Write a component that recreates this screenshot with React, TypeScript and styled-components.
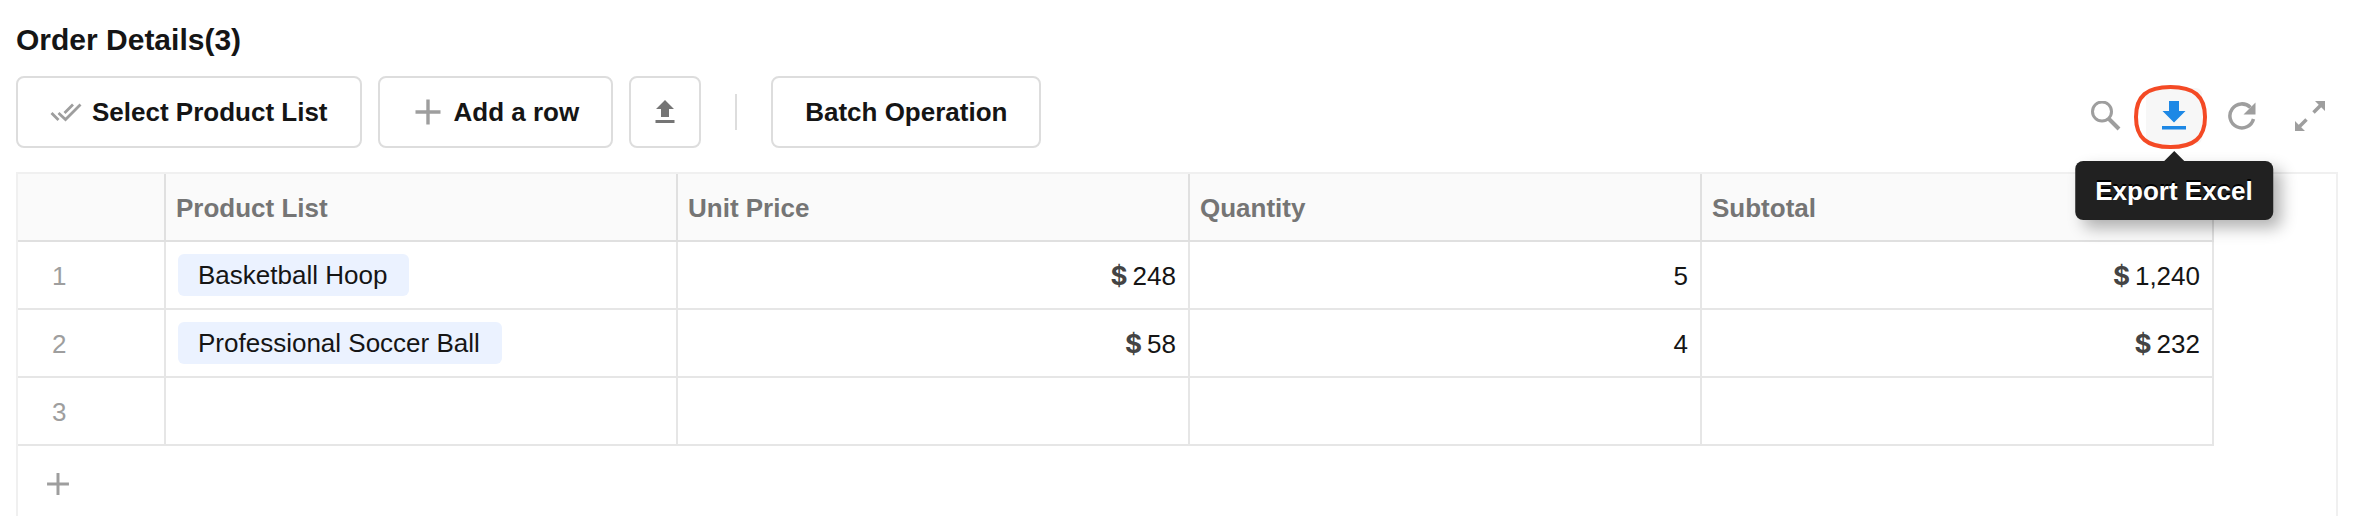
import React from "react";
import styled, { createGlobalStyle } from "styled-components";

const GlobalStyle = createGlobalStyle`
  *, *::before, *::after { box-sizing: border-box; }
  body {
    margin: 0;
    background: #fff;
    color: #151515;
    font-family: "Liberation Sans", Arial, sans-serif;
    font-size: 26px;
    line-height: 32px;
  }
  button { font: inherit; color: inherit; cursor: pointer; }
`;

const Page = styled.main`
  padding: 22px 30px 14px 16px;
`;

const Title = styled.h1`
  margin: 0;
  font-size: 30px;
  line-height: 36px;
  font-weight: 700;
`;

const Toolbar = styled.div`
  display: flex;
  align-items: flex-start;
  justify-content: space-between;
  margin: 18px 0 24px;
`;

const Actions = styled.div`
  display: flex;
  align-items: center;
  gap: 16px;
`;

const ActionButton = styled.button<{ $square?: boolean }>`
  display: flex;
  align-items: center;
  justify-content: center;
  gap: 10px;
  height: 72px;
  width: ${(p) => (p.$square ? "72px" : "auto")};
  padding: ${(p) => (p.$square ? "0" : "0 32px")};
  border: 2px solid #ddd;
  border-radius: 8px;
  background: #fff;
  font-weight: 700;
  white-space: nowrap;
`;

const Divider = styled.span`
  width: 2px;
  height: 36px;
  margin: 0 18px;
  background: #ddd;
`;

const Tools = styled.div`
  display: flex;
  gap: 12px;
  padding-top: 12px;
`;

const ToolSlot = styled.div`
  position: relative;
`;

const ToolButton = styled.button<{ $active?: boolean }>`
  display: flex;
  align-items: center;
  justify-content: center;
  width: 56px;
  height: 56px;
  padding: 0;
  border: 0;
  border-radius: 6px;
  background: ${(p) => (p.$active ? "#f7f7f7" : "transparent")};
`;

const Ring = styled.svg`
  position: absolute;
  left: -12px;
  top: -4px;
  overflow: visible;
  pointer-events: none;
`;

const Tooltip = styled.div`
  position: absolute;
  z-index: 2;
  top: 73px;
  left: 50%;
  transform: translateX(-50%);
  padding: 14px 20px 13px;
  border-radius: 8px;
  background: #212121;
  color: #fff;
  font-weight: 700;
  white-space: nowrap;
  text-shadow: 0 -2px 0 #000;
  box-shadow: 8px 8px 16px rgba(0, 0, 0, 0.3);

  &::before {
    content: "";
    position: absolute;
    top: -10px;
    left: 50%;
    margin-left: -10px;
    border: solid transparent;
    border-width: 0 10px 10px;
    border-bottom-color: #212121;
  }
`;

const Sheet = styled.section`
  border: 2px solid #f0f0f0;
  border-bottom: 0;
`;

const Grid = styled.table`
  width: calc(100% - 122px);
  table-layout: fixed;
  border-collapse: separate;
  border-spacing: 0;
`;

const IndexCol = styled.col`
  width: 148px;
`;

const HeadCell = styled.th`
  height: 68px;
  padding: 2px 10px 0;
  border: solid #e0e0e0;
  border-width: 0 2px 2px 0;
  background: #fafafa;
  color: #757575;
  font-weight: 700;
  text-align: left;
`;

const Cell = styled.td<{ $numeric?: boolean }>`
  height: 68px;
  padding: ${(p) => (p.$numeric ? "2px 12px 0" : "0 12px")};
  border: solid #e6e6e6;
  border-width: 0 2px 2px 0;
  text-align: ${(p) => (p.$numeric ? "right" : "left")};
`;

const IndexCell = styled(Cell)`
  padding: 2px 0 0 34px;
  color: #9e9e9e;
`;

const Chip = styled.span`
  display: block;
  width: fit-content;
  padding: 5px 22px 5px 20px;
  border-radius: 6px;
  background: #ebf2ff;
`;

const Currency = styled.span`
  margin-right: 5px;
  color: #444;
  font-family: Inter, sans-serif;
  font-weight: 700;
  line-height: 1;
`;

const AddRow = styled.button`
  display: flex;
  align-items: center;
  width: 148px;
  height: 70px;
  padding: 6px 0 0 26px;
  border: 0;
  background: transparent;
`;

const CheckAllIcon = () => (
  <svg width="32" height="32" viewBox="0 0 32 32" fill="none" stroke="#9e9e9e" strokeWidth="2.8" aria-hidden="true">
    <path d="M1.500 17l7 7M8.500 17l7 6.500L30.500 8.500M14.500 17l8.500-8.500" />
  </svg>
);

const PlusIcon = ({ size, color = "#9e9e9e" }: { size: number; color?: string }) => (
  <svg width={size} height={size} viewBox="0 0 32 32" fill="none" stroke={color} strokeWidth="3.4" aria-hidden="true">
    <path d="M16 3.500v25M3.500 16h25" />
  </svg>
);

const UploadIcon = () => (
  <svg width="20" height="24" viewBox="0 0 20 24" fill="#757575" aria-hidden="true">
    <path d="M10 0L19 9h-5v8H6v-8H1zM0.500 20h19v3h-19z" />
  </svg>
);

const SearchIcon = () => (
  <svg width="30" height="30" viewBox="0 0 30 30" fill="none" stroke="#9e9e9e" aria-hidden="true">
    <circle cx="11" cy="10.500" r="9.500" strokeWidth="3" />
    <path d="M17.500 17.500L28 28" strokeWidth="4" />
  </svg>
);

const DownloadIcon = () => (
  <svg width="24" height="30" viewBox="0 0 24 30" fill="#1e88e5" aria-hidden="true">
    <path d="M7 0h10v10h6.500L12 21.500 0.500 10H7zM0 25h24v3.500H0z" />
  </svg>
);

const RefreshIcon = () => (
  <svg width="30" height="30" viewBox="0 0 30 30" aria-hidden="true">
    <path d="M23.500 6.500A12 12 0 1 0 26.500 18" fill="none" stroke="#9e9e9e" strokeWidth="3.500" />
    <path d="M28.500 1.500v12h-12z" fill="#9e9e9e" />
  </svg>
);

const ExpandIcon = () => (
  <svg width="32" height="32" viewBox="0 0 32 32" fill="#9e9e9e" aria-hidden="true">
    <path d="M21 1h10v10zM1 21v10h10z" />
    <path d="M19.500 12.500l8-8M12.500 19.500l-8 8" stroke="#9e9e9e" strokeWidth="3.500" />
  </svg>
);

const columns = ["Product List", "Unit Price", "Quantity", "Subtotal"];

const orders = [
  { product: "Basketball Hoop", price: "248", quantity: "5", subtotal: "1,240" },
  { product: "Professional Soccer Ball", price: "58", quantity: "4", subtotal: "232" },
  { product: "", price: "", quantity: "", subtotal: "" },
];

const Money = ({ amount }: { amount: string }) =>
  amount ? (
    <>
      <Currency>$</Currency>
      {amount}
    </>
  ) : null;

export default function App() {
  return (
    <Page>
      <GlobalStyle />
      <Title>Order Details(3)</Title>
      <Toolbar>
        <Actions>
          <ActionButton type="button">
            <CheckAllIcon />
            Select Product List
          </ActionButton>
          <ActionButton type="button">
            <PlusIcon size={32} />
            Add a row
          </ActionButton>
          <ActionButton type="button" $square aria-label="Import">
            <UploadIcon />
          </ActionButton>
          <Divider />
          <ActionButton type="button">Batch Operation</ActionButton>
        </Actions>
        <Tools>
          <ToolButton type="button" aria-label="Search">
            <SearchIcon />
          </ToolButton>
          <ToolSlot>
            <ToolButton type="button" $active aria-labelledby="export-tip">
              <DownloadIcon />
            </ToolButton>
            <Ring width="74" height="66" viewBox="0 0 74 66" fill="none" stroke="#f44a25" strokeWidth="4" aria-hidden="true">
              <path d="M36.500 3C60 3 71 12 71 33S60 63 36.500 63 2 54 2 33 13 3 36.500 3z" />
            </Ring>
            <Tooltip id="export-tip" role="tooltip">
              Export Excel
            </Tooltip>
          </ToolSlot>
          <ToolButton type="button" aria-label="Refresh">
            <RefreshIcon />
          </ToolButton>
          <ToolButton type="button" aria-label="Full screen">
            <ExpandIcon />
          </ToolButton>
        </Tools>
      </Toolbar>
      <Sheet>
        <Grid>
          <colgroup>
            <IndexCol />
            {columns.map((name) => (
              <col key={name} />
            ))}
          </colgroup>
          <thead>
            <tr>
              <HeadCell aria-label="Row" />
              {columns.map((name) => (
                <HeadCell key={name} scope="col">
                  {name}
                </HeadCell>
              ))}
            </tr>
          </thead>
          <tbody>
            {orders.map((order, i) => (
              <tr key={i}>
                <IndexCell>{i + 1}</IndexCell>
                <Cell>{order.product && <Chip>{order.product}</Chip>}</Cell>
                <Cell $numeric>
                  <Money amount={order.price} />
                </Cell>
                <Cell $numeric>{order.quantity}</Cell>
                <Cell $numeric>
                  <Money amount={order.subtotal} />
                </Cell>
              </tr>
            ))}
          </tbody>
        </Grid>
        <AddRow type="button" aria-label="Add row">
          <PlusIcon size={28} />
        </AddRow>
      </Sheet>
    </Page>
  );
}
